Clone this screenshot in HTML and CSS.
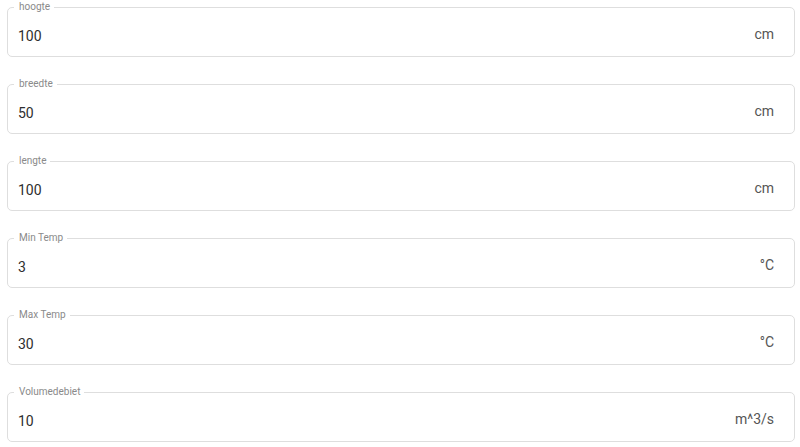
FILE: index.html
```html
<!DOCTYPE html>
<html lang="nl">
<head>
<meta charset="utf-8">
<title>Afmetingen</title>
<link rel="stylesheet" href="styles.css">
</head>
<body>
<form class="form">
  <div class="field">
    <span class="label">hoogte</span>
    <div class="row"><span class="value">100</span><span class="suffix">cm</span></div>
  </div>
  <div class="field">
    <span class="label">breedte</span>
    <div class="row"><span class="value">50</span><span class="suffix">cm</span></div>
  </div>
  <div class="field">
    <span class="label">lengte</span>
    <div class="row"><span class="value">100</span><span class="suffix">cm</span></div>
  </div>
  <div class="field">
    <span class="label">Min Temp</span>
    <div class="row"><span class="value">3</span><span class="suffix">°C</span></div>
  </div>
  <div class="field">
    <span class="label">Max Temp</span>
    <div class="row"><span class="value">30</span><span class="suffix">°C</span></div>
  </div>
  <div class="field">
    <span class="label">Volumedebiet</span>
    <div class="row"><span class="value">10</span><span class="suffix">m^3/s</span></div>
  </div>
</form>
</body>
</html>
```

FILE: styles.css
```css
html, body {
  margin: 0;
  padding: 0;
  background: #fff;
}
body {
  font-family: Roboto, "Liberation Sans", sans-serif;
}
.form {
  display: flex;
  flex-direction: column;
  gap: 27px;
  padding: 7px 0 0 7px;
}
.field {
  position: relative;
  width: 788px;
  height: 50px;
  box-sizing: border-box;
  border: 1px solid #dedede;
  border-radius: 5px;
}
.label {
  position: absolute;
  left: 6px;
  top: -7px;
  padding: 0 4px 0 5px;
  background: #fff;
  font-size: 10px;
  line-height: 12px;
  color: #8a8a8a;
}
.row {
  display: flex;
  align-items: flex-end;
  justify-content: space-between;
  padding: 18px 20px 0 10px;
}
.value {
  font-size: 14px;
  line-height: 16px;
  color: #2e2e2e;
}
.suffix {
  font-size: 14px;
  line-height: 16px;
  color: #555;
  padding-bottom: 2px;
}
```
